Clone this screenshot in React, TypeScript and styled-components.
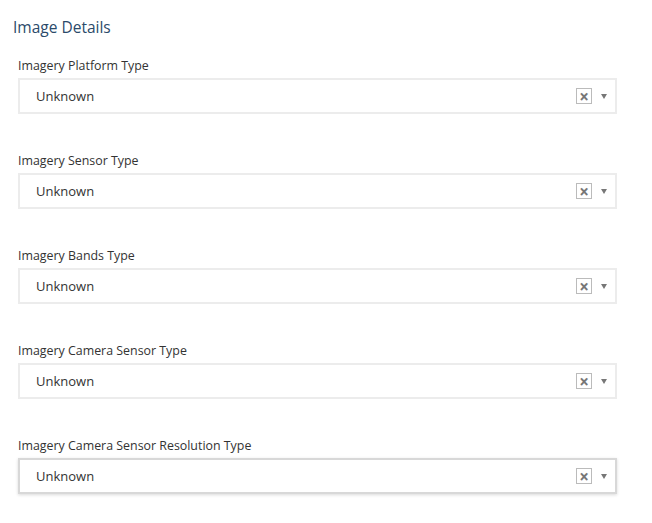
import styled, { createGlobalStyle } from "styled-components";

const fields = [
  { label: "Imagery Platform Type", value: "Unknown" },
  { label: "Imagery Sensor Type", value: "Unknown" },
  { label: "Imagery Bands Type", value: "Unknown" },
  { label: "Imagery Camera Sensor Type", value: "Unknown" },
  { label: "Imagery Camera Sensor Resolution Type", value: "Unknown", focused: true },
];

function App() {
  return (
    <Page>
      <GlobalStyle />
      <Heading>Image Details</Heading>
      <Fields>
        {fields.map((f) => (
          <Field key={f.label}>
            <Label>{f.label}</Label>
            <Select $focused={!!f.focused}>
              <Value>{f.value}</Value>
              <Clear>×</Clear>
              <Arrow />
            </Select>
          </Field>
        ))}
      </Fields>
    </Page>
  );
}

const GlobalStyle = createGlobalStyle`
  body {
    margin: 0;
    background: #fff;
    font-family: "Open Sans", "Liberation Sans", sans-serif;
  }
`;

const Page = styled.div`
  width: 652px;
  height: 523px;
  padding: 17px 0 0 13px;
  box-sizing: border-box;
`;

const Heading = styled.h2`
  margin: 0 0 21px;
  font-size: 15.5px;
  font-weight: 400;
  line-height: 20px;
  color: #2b4a6a;
`;

const Fields = styled.div`
  display: flex;
  flex-direction: column;
  gap: 39px;
  padding-left: 5px;
`;

const Field = styled.div`
  display: flex;
  flex-direction: column;
`;

const Label = styled.label`
  font-size: 12.4px;
  line-height: 16px;
  color: #333;
  margin-bottom: 4px;
`;

const Select = styled.div<{ $focused: boolean }>`
  width: 599px;
  height: 36px;
  box-sizing: border-box;
  display: flex;
  align-items: center;
  border: 2px solid ${(p) => (p.$focused ? "#d8d8d8" : "#ececec")};
  box-shadow: ${(p) => (p.$focused ? "0 1px 3px rgba(0,0,0,0.15)" : "none")};
  padding: 0 0 0 16px;
`;

const Value = styled.span`
  flex: 1;
  font-size: 13px;
  color: #333;
`;

const Clear = styled.span`
  width: 14px;
  height: 14px;
  border: 1px solid #bbb;
  display: flex;
  align-items: center;
  justify-content: center;
  font-size: 17px;
  font-weight: 700;
  line-height: 1;
  color: #777;
  margin-right: 9px;
`;

const Arrow = styled.span`
  width: 0;
  height: 0;
  border-left: 3.5px solid transparent;
  border-right: 3.5px solid transparent;
  border-top: 5px solid #777;
  margin-right: 8px;
`;

export default App;
